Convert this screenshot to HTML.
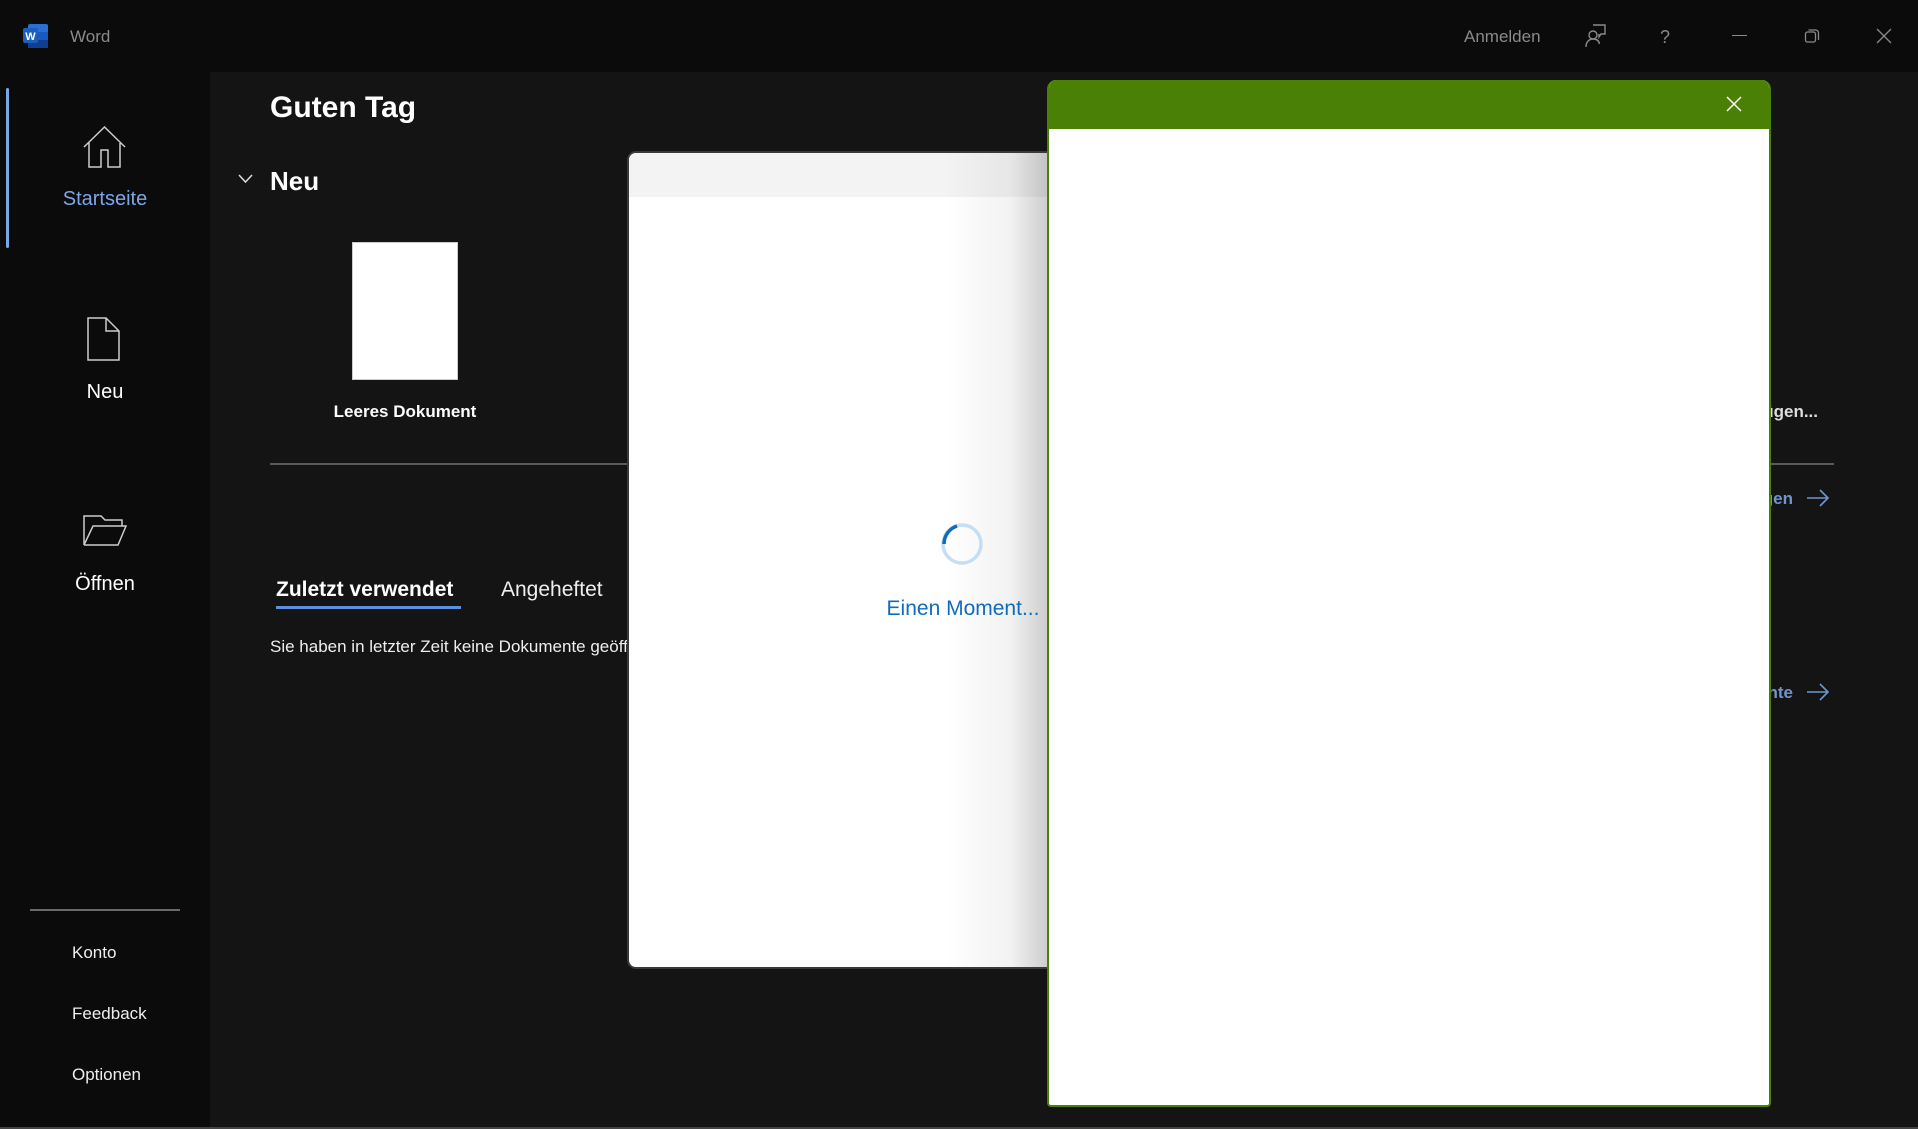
<!DOCTYPE html>
<html><head><meta charset="utf-8"><style>
*{margin:0;padding:0;box-sizing:border-box}
body{width:1918px;height:1129px;overflow:hidden;background:#0b0b0b;font-family:"Segoe UI","Liberation Sans",sans-serif;color:#fff;position:relative}
.a{position:absolute;white-space:nowrap}
</style></head><body>
<!-- title bar -->
<div class="a" style="left:0;top:0;width:1918px;height:72px;background:#0b0b0b"></div>
<svg class="a" style="left:23px;top:24px" width="26" height="24" viewBox="0 0 26 24"><rect x="5" y="0" width="20" height="24" rx="2" fill="#2b6fd6"/><rect x="5" y="8" width="20" height="8" fill="#185abd"/><rect x="5" y="16" width="20" height="8" fill="#103f91"/><rect x="0" y="4" width="15" height="15" rx="2" fill="#1b5ebe"/><text x="7.5" y="16" font-family="Liberation Sans" font-weight="bold" font-size="11" fill="#fff" text-anchor="middle">W</text></svg>
<div class="a" style="left:70px;top:27px;font-size:17px;color:#8a8a8a">Word</div>
<div class="a" style="left:1464px;top:27px;font-size:17px;color:#8a8a8a">Anmelden</div>
<svg class="a" style="left:1582px;top:22px" width="28" height="28" viewBox="0 0 28 28" fill="none" stroke="#8a8a8a" stroke-width="1.4"><path d="M11 3h12v9h-4l-2 3v-3"/><circle cx="11" cy="13" r="4"/><path d="M4 25c0-5 3-8 7-8s6 2 6.5 5"/></svg>
<div class="a" style="left:1660px;top:27px;font-size:18px;color:#8a8a8a">?</div>
<div class="a" style="left:1732px;top:35px;width:15px;height:1px;background:#8a8a8a"></div>
<svg class="a" style="left:1804px;top:28px" width="16" height="16" viewBox="0 0 16 16" fill="none" stroke="#8a8a8a" stroke-width="1.3"><rect x="1.5" y="4" width="10" height="10" rx="2"/><path d="M4.5 2h7a3 3 0 0 1 3 3v7"/></svg>
<svg class="a" style="left:1876px;top:28px" width="16" height="16" viewBox="0 0 16 16" stroke="#8a8a8a" stroke-width="1.3"><path d="M1 1L15 15M15 1L1 15"/></svg>

<!-- sidebar -->
<div class="a" style="left:6px;top:88px;width:3px;height:160px;background:#7aa6e8;border-radius:2px"></div>
<svg class="a" style="left:83px;top:126px" width="44" height="42" viewBox="0 0 44 42" fill="none" stroke="#ccc" stroke-width="1.5"><path d="M1 21L21.5 1L42 21M6 17v24h12V24h7v17h12V17"/></svg>
<div class="a" style="left:0;width:210px;text-align:center;top:188px;font-size:20px;color:#7ba7e9">Startseite</div>
<svg class="a" style="left:87px;top:317px" width="34" height="44" viewBox="0 0 34 44" fill="none" stroke="#ccc" stroke-width="1.5"><path d="M1 1h18l13 13v29H1zM19 1v13h13"/></svg>
<div class="a" style="left:0;width:210px;text-align:center;top:381px;font-size:20px;color:#fff">Neu</div>
<svg class="a" style="left:83px;top:515px" width="46" height="32" viewBox="0 0 46 32" fill="none" stroke="#ccc" stroke-width="1.5"><path d="M1 30V1h17l4 4h17v6M1 30h34l8-19H10L1 30"/></svg>
<div class="a" style="left:0;width:210px;text-align:center;top:573px;font-size:20px;color:#fff">Öffnen</div>
<div class="a" style="left:30px;top:909px;width:150px;height:2px;background:#6a6a6a"></div>
<div class="a" style="left:72px;top:943px;font-size:17px;color:#eee">Konto</div>
<div class="a" style="left:72px;top:1004px;font-size:17px;color:#eee">Feedback</div>
<div class="a" style="left:72px;top:1065px;font-size:17px;color:#eee">Optionen</div>

<!-- content -->
<div class="a" style="left:210px;top:72px;width:1708px;height:1055px;background:#141414"></div>
<div class="a" style="left:0;top:1127px;width:1918px;height:2px;background:#444"></div>
<div class="a" style="left:270px;top:91px;font-size:30px;font-weight:bold">Guten Tag</div>
<svg class="a" style="left:238px;top:174px" width="15" height="10" viewBox="0 0 15 10" fill="none" stroke="#ddd" stroke-width="1.5"><path d="M1 1l6.5 7L14 1"/></svg>
<div class="a" style="left:270px;top:166px;font-size:26px;font-weight:bold">Neu</div>
<div class="a" style="left:352px;top:242px;width:106px;height:138px;background:#fff;border:1px solid #ccc"></div>
<div class="a" style="left:305px;width:200px;text-align:center;top:402px;font-size:17px;font-weight:bold">Leeres Dokument</div>
<div class="a" style="left:1500px;width:318px;text-align:right;top:402px;font-size:17px;font-weight:bold;color:#ddd">Einfügen...</div>
<div class="a" style="left:270px;top:463px;width:1564px;height:2px;background:#5a5a5a"></div>
<div class="a" style="left:1500px;width:293px;text-align:right;top:489px;font-size:17px;font-weight:bold;color:#6f95d0">Vorlagen</div>
<svg class="a" style="left:1806px;top:488px" width="24" height="20" viewBox="0 0 24 20" fill="none" stroke="#6f95d0" stroke-width="1.6"><path d="M1 10h21M14 2l8 8-8 8"/></svg>
<div class="a" style="left:1500px;width:293px;text-align:right;top:683px;font-size:17px;font-weight:bold;color:#6f95d0">Dokumente</div>
<svg class="a" style="left:1806px;top:682px" width="24" height="20" viewBox="0 0 24 20" fill="none" stroke="#6f95d0" stroke-width="1.6"><path d="M1 10h21M14 2l8 8-8 8"/></svg>
<div class="a" style="left:276px;top:578px;font-size:21px;font-weight:bold">Zuletzt verwendet</div>
<div class="a" style="left:276px;top:606px;width:185px;height:3px;background:#5b8fdf"></div>
<div class="a" style="left:501px;top:578px;font-size:21px;color:#eee">Angeheftet</div>
<div class="a" style="left:270px;top:637px;font-size:17px;color:#eee">Sie haben in letzter Zeit keine Dokumente geöffnet.</div>

<!-- loading dialog -->
<div class="a" style="left:627px;top:151px;width:450px;height:818px;background:#fff;border:2px solid #3a3a3a;border-radius:9px;overflow:hidden">
 <div style="height:44px;background:#f3f3f3"></div>
 <div class="a" style="right:0;top:0;width:130px;height:100%;background:linear-gradient(to right,rgba(0,0,0,0),rgba(0,0,0,0.05) 50%,rgba(0,0,0,0.3))"></div>
</div>
<svg class="a" style="left:940px;top:522px" width="44" height="44" viewBox="0 0 44 44" fill="none" stroke-width="3.5"><circle cx="22" cy="22" r="19" stroke="#c6def3"/><path d="M4 22A19 19 0 0 1 17 4" stroke="#0f6cbd"/></svg>
<div class="a" style="left:860px;width:206px;text-align:center;top:597px;font-size:21px;color:#0f6cbd">Einen Moment...</div>

<!-- green dialog -->
<div class="a" style="left:1047px;top:80px;width:724px;height:1027px;background:#fff;border:2px solid #4a8005;border-top:none;border-radius:9px 9px 4px 4px;overflow:hidden">
 <div style="height:49px;background:#4a8005"></div>
</div>
<svg class="a" style="left:1726px;top:96px" width="16" height="16" viewBox="0 0 16 16" stroke="#fff" stroke-width="1.5"><path d="M1 1L15 15M15 1L1 15"/></svg>
</body></html>
